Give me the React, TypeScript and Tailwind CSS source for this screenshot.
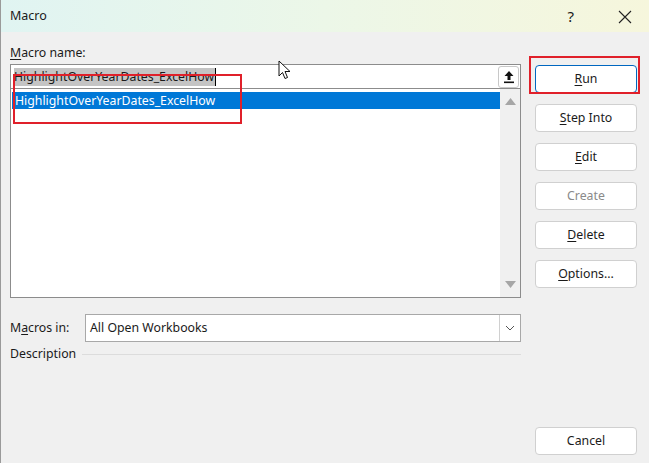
import React from "react";

const font = { fontFamily: '"Noto Sans", "Open Sans", sans-serif' };

function Btn({ label, u, rest, primary, disabled }: { label?: string; u: string; rest: string; primary?: boolean; disabled?: boolean }) {
  return (
    <div
      className={
        "flex h-[28px] w-[102px] items-center justify-center rounded-[4px] border bg-white text-[12.3px] " +
        (primary ? "border-[#0067c0]" : "border-[#d0d0d0]") +
        (disabled ? " text-[#8a8a8a]" : " text-[#1a1a1a]")
      }
    >
      {disabled ? (
        label
      ) : (
        <span>
          <span className="underline underline-offset-2">{u}</span>
          {rest}
        </span>
      )}
    </div>
  );
}

export default function App() {
  return (
    <div style={font} className="relative h-[463px] w-[649px] overflow-hidden border-l border-[#9a9a9a] bg-[#f0f0f0] text-[12.3px] text-[#1a1a1a]">
      <div className="flex h-[32px] items-center bg-gradient-to-r from-[#e0f4f2] via-[#ecf7e8] to-[#f6f6dc] pl-[9px] pr-[16px] pt-[1px]">
        <span className="text-[12.5px]">Macro</span>
        <span className="ml-auto mr-[44px] text-[15px]">?</span>
        <svg width="14" height="14" viewBox="0 0 14 14" className="mr-[1px]">
          <path d="M1 1 L13 13 M13 1 L1 13" stroke="#222" strokeWidth="1.1" />
        </svg>
      </div>

      <div className="flex">
        <div className="ml-[9px] w-[511px]">
          <div className="mt-[12px] h-[17px] leading-[17px]">
            <span className="underline underline-offset-2">M</span>acro name:
          </div>
          <div className="mt-[3px] flex h-[25px] items-center border border-[#8c8c8c] bg-white pl-[3px] pr-[1px]">
            <div className="flex h-[18px] items-center bg-[#c4c4c4] pr-[1px] leading-[18px]">HighlightOverYearDates_ExcelHow</div>
            <div className="h-[18px] w-px bg-black" />
            <div className="ml-auto flex h-[22px] w-[21px] items-center justify-center rounded-[3px] border border-[#c8c8c8] bg-white">
              <svg width="12" height="14" viewBox="0 0 12 14">
                <path d="M6 1 L1.5 6 H4.5 V10 H7.5 V6 H10.5 Z" fill="#111" />
                <rect x="1" y="11.5" width="10" height="1.6" fill="#111" />
              </svg>
            </div>
          </div>
          <div className="flex h-[209px] border border-t-0 border-[#8c8c8c] bg-white">
            <div className="flex-1 pl-[1px] pt-[3px]">
              <div className="h-[17px] bg-[#0078d7] pl-[3px] leading-[17px] text-white">HighlightOverYearDates_ExcelHow</div>
            </div>
            <div className="flex w-[20px] flex-col items-center justify-between bg-[#f0f0f0] py-[9px]">
              <svg width="11" height="7" viewBox="0 0 11 7"><path d="M5.5 0 L11 7 H0 Z" fill="#a6a6a6" /></svg>
              <svg width="11" height="7" viewBox="0 0 11 7"><path d="M0 0 H11 L5.5 7 Z" fill="#a6a6a6" /></svg>
            </div>
          </div>
          <div className="mt-[16px] flex items-center">
            <span className="w-[75px]">
              M<span className="underline underline-offset-2">a</span>cros in:
            </span>
            <div className="flex h-[28px] flex-1 items-center border border-[#a8a8a8] bg-white pl-[4px]">
              <span>All Open Workbooks</span>
              <div className="ml-auto flex h-full w-[21px] items-center justify-center border-l border-[#d0d0d0]">
                <svg width="10" height="6" viewBox="0 0 10 6"><path d="M1 1 L5 5 L9 1" stroke="#555" fill="none" strokeWidth="1" /></svg>
              </div>
            </div>
          </div>
          <div className="mt-[3px] flex items-center">
            <span>Description</span>
            <div className="ml-[6px] h-px flex-1 bg-[#dcdcdc]" />
          </div>
        </div>

        <div className="ml-[14px] flex h-[423px] flex-col pt-[33px]">
          <div className="flex flex-col gap-[11px]">
            <Btn u="R" rest="un" primary />
            <Btn u="S" rest="tep Into" />
            <Btn u="E" rest="dit" />
            <Btn label="Create" u="" rest="" disabled />
            <Btn u="D" rest="elete" />
            <Btn u="O" rest="ptions..." />
          </div>
          <div className="mt-auto">
            <div className="flex h-[28px] w-[102px] items-center justify-center rounded-[4px] border border-[#d0d0d0] bg-white">Cancel</div>
          </div>
        </div>
      </div>

      <div className="absolute left-[12px] top-[74px] h-[50px] w-[229px] border-2 border-[#e0202a]" />
      <div className="absolute left-[528px] top-[56px] h-[38px] w-[111px] border-2 border-[#e0202a]" />
      <svg className="absolute left-[277px] top-[60px]" width="14" height="21" viewBox="0 0 14 21">
        <path d="M1 1 L1 16 L4.5 12.5 L7 18.5 L9.5 17.5 L7 11.5 L12 11.5 Z" fill="white" stroke="#111" strokeWidth="1" strokeLinejoin="round" />
      </svg>
    </div>
  );
}
